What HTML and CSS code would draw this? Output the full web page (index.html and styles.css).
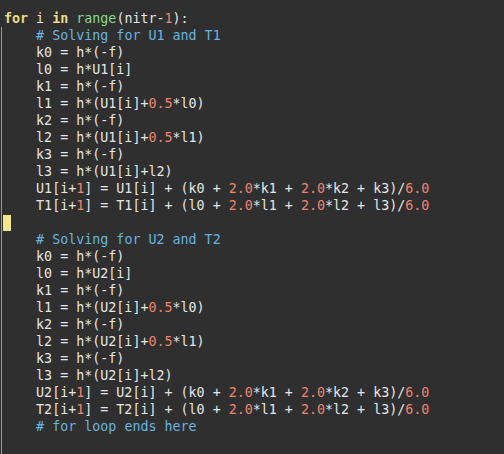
FILE: index.html
```html
<!DOCTYPE html>
<html>
<head>
<meta charset="utf-8">
<link rel="stylesheet" href="styles.css">
</head>
<body>
<div class="editor">
<div class="line"><span class="kw">for</span> i <span class="kw">in</span> <span class="fn">range</span>(nitr-<span class="num">1</span>):</div>
<div class="block">
<div class="line">    <span class="cm"># Solving for U1 and T1</span></div>
<div class="line">    k0 = h*(-f)</div>
<div class="line">    l0 = h*U1[i]</div>
<div class="line">    k1 = h*(-f)</div>
<div class="line">    l1 = h*(U1[i]+<span class="num">0.5</span>*l0)</div>
<div class="line">    k2 = h*(-f)</div>
<div class="line">    l2 = h*(U1[i]+<span class="num">0.5</span>*l1)</div>
<div class="line">    k3 = h*(-f)</div>
<div class="line">    l3 = h*(U1[i]+l2)</div>
<div class="line">    U1[i+<span class="num">1</span>] = U1[i] + (k0 + <span class="num">2.0</span>*k1 + <span class="num">2.0</span>*k2 + k3)/<span class="num">6.0</span></div>
<div class="line">    T1[i+<span class="num">1</span>] = T1[i] + (l0 + <span class="num">2.0</span>*l1 + <span class="num">2.0</span>*l2 + l3)/<span class="num">6.0</span></div>
<div class="line"><span class="cursor"></span></div>
<div class="line">    <span class="cm"># Solving for U2 and T2</span></div>
<div class="line">    k0 = h*(-f)</div>
<div class="line">    l0 = h*U2[i]</div>
<div class="line">    k1 = h*(-f)</div>
<div class="line">    l1 = h*(U2[i]+<span class="num">0.5</span>*l0)</div>
<div class="line">    k2 = h*(-f)</div>
<div class="line">    l2 = h*(U2[i]+<span class="num">0.5</span>*l1)</div>
<div class="line">    k3 = h*(-f)</div>
<div class="line">    l3 = h*(U2[i]+l2)</div>
<div class="line">    U2[i+<span class="num">1</span>] = U2[i] + (k0 + <span class="num">2.0</span>*k1 + <span class="num">2.0</span>*k2 + k3)/<span class="num">6.0</span></div>
<div class="line">    T2[i+<span class="num">1</span>] = T2[i] + (l0 + <span class="num">2.0</span>*l1 + <span class="num">2.0</span>*l2 + l3)/<span class="num">6.0</span></div>
<div class="line">    <span class="cm"># for loop ends here</span></div>
</div>
</div>
</body>
</html>
```
FILE: styles.css
```css
html, body {
  margin: 0;
  padding: 0;
  height: 100%;
  background: #2f2f2f;
  overflow: hidden;
}
.editor {
  height: 100vh;
  box-sizing: border-box;
  display: flex;
  flex-direction: column;
  padding-top: 10px;
  font-family: "DejaVu Sans Mono", monospace;
  font-size: 13.33px;
  line-height: 17px;
  color: #e6e6e6;
}
.line {
  white-space: pre;
  height: 17px;
}
.editor > .line {
  padding-left: 4px;
}
.block {
  flex: 1;
  margin-left: 1px;
  border-left: 1px solid #9a9a9a;
  padding-left: 2px;
}
.kw {
  color: #ecdc86;
  font-weight: bold;
}
.fn {
  color: #86d98a;
}
.num {
  color: #f2836f;
}
.cm {
  color: #69b4e0;
}
.cursor {
  display: inline-block;
  width: 8px;
  height: 16px;
  margin-left: -1px;
  vertical-align: top;
  margin-top: 1px;
  background: #f0e68c;
}
```
